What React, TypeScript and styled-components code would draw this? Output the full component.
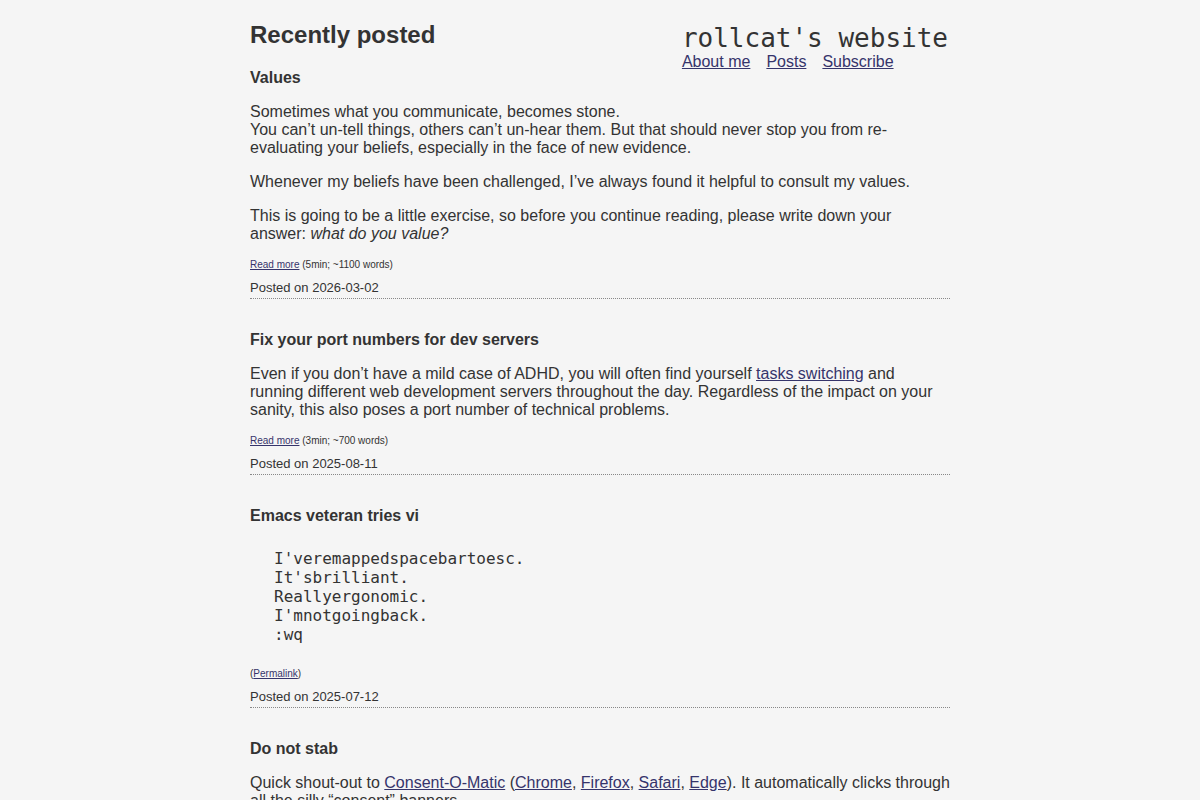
import React from "react";
import styled, { createGlobalStyle } from "styled-components";

const Global = createGlobalStyle`
  html, body {
    margin: 0;
    padding: 0;
    background: #f5f5f5;
    color: #333333;
    font-family: "Liberation Sans", Arial, sans-serif;
    font-size: 16px;
    line-height: 18px;
  }
  a { color: #35346b; }
`;

const Page = styled.div`
  width: 700px;
  margin: 0 auto;
  padding-top: 21px;
`;

const Header = styled.header`
  float: right;
  padding-top: 2px;
  margin-right: 2px;
`;

const SiteTitle = styled.div`
  font-family: "DejaVu Sans Mono", monospace;
  font-size: 26px;
  line-height: 30px;
  color: #333;
`;

const Nav = styled.nav`
  display: flex;
  gap: 16px;
  line-height: 18px;
`;

const PageTitle = styled.h1`
  margin: 0;
  font-size: 24px;
  line-height: 28px;
  font-weight: bold;
`;

const Article = styled.article`
  padding-top: 20px;
  & + & {
    padding-top: 32px;
  }
`;

const PostTitle = styled.h2`
  margin: 0;
  font-size: 16px;
  line-height: 18px;
  font-weight: bold;
`;

const Para = styled.p`
  margin: 16px 0 0;
`;

const Pre = styled.pre`
  margin: 16px 0 0;
  padding: 8px 24px;
  font-family: "DejaVu Sans Mono", monospace;
  font-size: 16px;
  line-height: 19px;
`;

const Meta = styled.div`
  margin-top: 16px;
  font-size: 10px;
  line-height: 12px;
`;

const Posted = styled.div`
  margin-top: 9px;
  font-size: 13px;
  line-height: 16px;
  padding-bottom: 2px;
  border-bottom: 1px dotted #888;
`;

export default function App() {
  return (
    <>
      <Global />
      <Page>
        <Header>
          <SiteTitle>rollcat's website</SiteTitle>
          <Nav>
            <a href="#">About me</a>
            <a href="#">Posts</a>
            <a href="#">Subscribe</a>
          </Nav>
        </Header>
        <PageTitle>Recently posted</PageTitle>

        <Article>
          <PostTitle>Values</PostTitle>
          <Para>
            Sometimes what you communicate, becomes stone.
            <br />
            You can’t un-tell things, others can’t un-hear them. But that should never stop you from re-evaluating your beliefs, especially in the face of new evidence.
          </Para>
          <Para>Whenever my beliefs have been challenged, I’ve always found it helpful to consult my values.</Para>
          <Para>
            This is going to be a little exercise, so before you continue reading, please write down your answer: <em>what do you value?</em>
          </Para>
          <Meta>
            <a href="#">Read more</a> (5min; ~1100 words)
          </Meta>
          <Posted>Posted on 2026-03-02</Posted>
        </Article>

        <Article>
          <PostTitle>Fix your port numbers for dev servers</PostTitle>
          <Para>
            Even if you don’t have a mild case of ADHD, you will often find yourself <a href="#">tasks switching</a> and running different web development servers throughout the day. Regardless of the impact on your sanity, this also poses a port number of technical problems.
          </Para>
          <Meta>
            <a href="#">Read more</a> (3min; ~700 words)
          </Meta>
          <Posted>Posted on 2025-08-11</Posted>
        </Article>

        <Article>
          <PostTitle>Emacs veteran tries vi</PostTitle>
          <Pre>{"I'veremappedspacebartoesc.\nIt'sbrilliant.\nReallyergonomic.\nI'mnotgoingback.\n:wq"}</Pre>
          <Meta>
            (<a href="#">Permalink</a>)
          </Meta>
          <Posted>Posted on 2025-07-12</Posted>
        </Article>

        <Article>
          <PostTitle>Do not stab</PostTitle>
          <Para>
            Quick shout-out to <a href="#">Consent-O-Matic</a> (<a href="#">Chrome</a>, <a href="#">Firefox</a>, <a href="#">Safari</a>, <a href="#">Edge</a>). It automatically clicks through all the silly “consent” banners.
          </Para>
        </Article>
      </Page>
    </>
  );
}
